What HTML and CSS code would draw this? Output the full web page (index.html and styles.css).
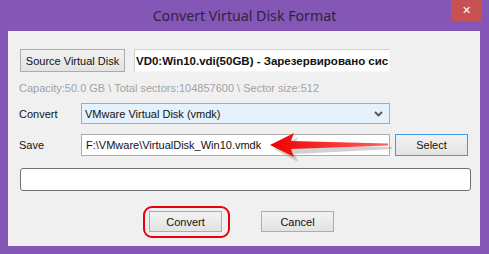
FILE: index.html
```html
<!DOCTYPE html>
<html>
<head>
    <meta charset="UTF-8">
    <title>Convert Virtual Disk Format</title>
    <link rel="stylesheet" href="styles.css">
</head>
<body>
    <div class="window">
        <div class="titlebar">
            <span class="title">Convert Virtual Disk Format</span>
            <span class="close">&#x2715;</span>
        </div>
        <div class="panel">
            <div class="row row-source">
                <span class="btn btn-source">Source Virtual Disk</span>
                <span class="source-box">VD0:Win10.vdi(50GB) - Зарезервировано сис</span>
            </div>
            <div class="info">Capacity:50.0 GB \ Total sectors:104857600 \ Sector size:512</div>
            <div class="row row-convert">
                <span class="label">Convert</span>
                <span class="combo">VMware Virtual Disk (vmdk)
                    <svg class="chev" width="9" height="6" viewBox="0 0 9 6"><path d="M1 1 L4.5 4.5 L8 1" fill="none" stroke="#555" stroke-width="1.8"/></svg>
                </span>
            </div>
            <div class="row row-save">
                <span class="label">Save</span>
                <span class="path-box">F:\VMware\VirtualDisk_Win10.vmdk</span>
                <span class="btn btn-select">Select</span>
            </div>
            <div class="progress"></div>
            <div class="actions">
                <span class="btn btn-action btn-convert">Convert</span>
                <span class="btn btn-action">Cancel</span>
            </div>

            <!-- annotation overlays -->
            <svg class="arrow" width="128" height="30" viewBox="0 0 128 30">
                <defs>
                    <linearGradient id="shaft" x1="0" x2="1" y1="0" y2="0">
                        <stop offset="0" stop-color="#ee0000"/>
                        <stop offset="1" stop-color="#ff6060"/>
                    </linearGradient>
                </defs>
                <path d="M4 14 L28 2 L25 10 L122 12 L122 14 L25 19 L28 27 Z" fill="#999" opacity="0.45" transform="translate(2 2)"/>
                <path d="M2 12 L26 0 L23 8 L120 10.5 L120 12.5 L23 16 L26 24 Z" fill="url(#shaft)"/>
            </svg>
            <div class="ring"></div>
        </div>
    </div>
</body>
</html>
```

FILE: styles.css
```css
body {
    margin: 0;
    font-family: "Liberation Sans", sans-serif;
}

.window {
    width: 489px;
    height: 254px;
    background: #8456b6;
    display: flex;
    flex-direction: column;
    box-sizing: border-box;
}

.titlebar {
    height: 31px;
    position: relative;
    display: flex;
    justify-content: center;
    align-items: center;
}

.title {
    font-family: "Noto Sans", sans-serif;
    font-size: 14.2px;
    color: #2e2340;
    margin-top: -1px;
}

.close {
    position: absolute;
    top: 0;
    right: 7px;
    width: 31px;
    height: 21px;
    background: #c75050;
    color: #fff;
    font-family: "DejaVu Sans", sans-serif;
    font-size: 11px;
    font-weight: bold;
    display: flex;
    align-items: center;
    justify-content: center;
}

.panel {
    position: relative;
    margin: 0 9px 0 8px;
    height: 215px;
    background: #f0f0f0;
    padding: 18px 0 0 12px;
    box-sizing: border-box;
    font-size: 11px;
    color: #111;
}

.row {
    display: flex;
    align-items: center;
}

.btn {
    box-sizing: border-box;
    border: 1px solid #acacac;
    background: linear-gradient(#f2f2f2, #e3e3e3);
    display: flex;
    align-items: center;
    justify-content: center;
}

.btn-source {
    width: 105px;
    height: 23px;
}

.source-box {
    margin-left: 9px;
    width: 256px;
    height: 23px;
    box-sizing: border-box;
    background: #fff;
    border: 1px solid #d0d0d0;
    border-bottom-color: #f6f6f6;
    border-right-color: #f6f6f6;
    font-weight: bold;
    font-size: 11.5px;
    padding-left: 1px;
    white-space: nowrap;
    overflow: hidden;
    display: flex;
    align-items: center;
}

.info {
    margin: 10px 0 0 -1px;
    color: #a2a2a2;
    height: 12px;
    line-height: 12px;
}

.label {
    width: 62px;
    margin-left: -1px;
}

.row-convert {
    margin-top: 9px;
}

.combo {
    width: 309px;
    height: 21px;
    box-sizing: border-box;
    background: #e5f1fb;
    border: 1px solid #7eb4ea;
    display: flex;
    align-items: center;
    justify-content: space-between;
    padding: 0 6px 0 3px;
}

.row-save {
    margin-top: 10px;
}

.path-box {
    width: 309px;
    height: 22px;
    box-sizing: border-box;
    background: #fff;
    border: 1px solid #acacac;
    display: flex;
    align-items: center;
    padding-left: 4px;
}

.btn-select {
    width: 73px;
    height: 22px;
    margin-left: 5px;
    border-color: #3c9ae8;
}

.progress {
    margin-top: 12px;
    width: 451px;
    height: 23px;
    box-sizing: border-box;
    background: #fff;
    border: 1px solid #707070;
    border-radius: 3px;
}

.actions {
    margin-top: 20px;
    display: flex;
    padding-left: 129px;
    gap: 39px;
}

.btn-action {
    width: 73px;
    height: 21px;
}

.arrow {
    position: absolute;
    left: 260px;
    top: 102px;
}

.ring {
    position: absolute;
    left: 135px;
    top: 175px;
    width: 87px;
    height: 32px;
    box-sizing: border-box;
    border: 2.5px solid #e8000b;
    border-radius: 9px;
}
```
